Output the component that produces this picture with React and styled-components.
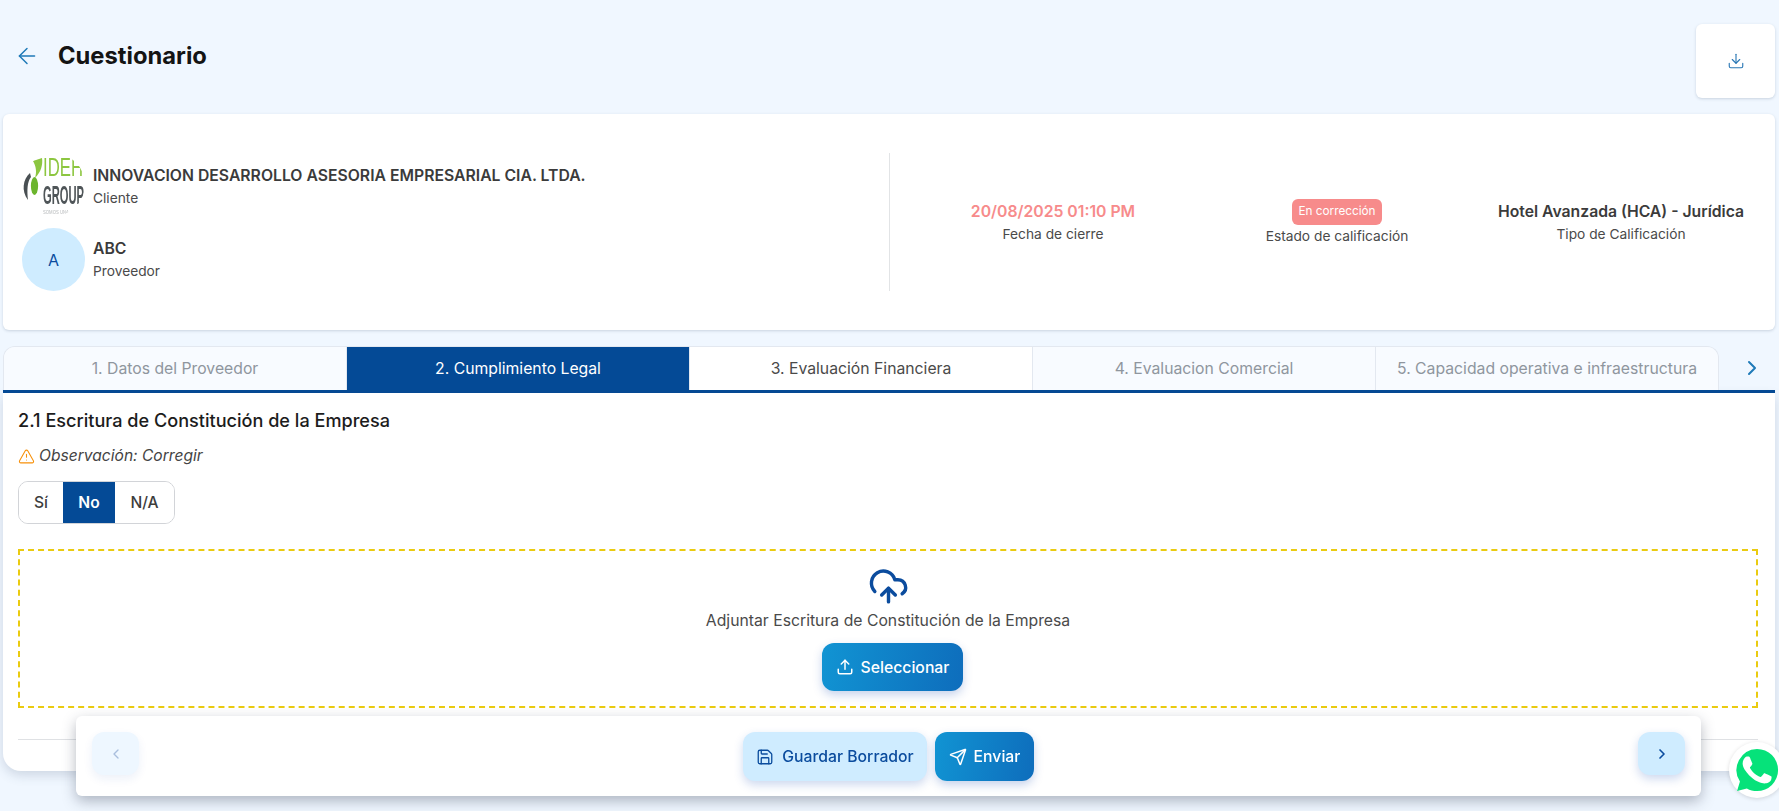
import React from "react";
import styled, { createGlobalStyle } from "styled-components";
import {
  ArrowLeft,
  ChevronLeft,
  ChevronRight,
  CloudUpload,
  Download,
  Save,
  Send,
  TriangleAlert,
  Upload,
} from "lucide-react";

const GlobalStyle = createGlobalStyle`
  html, body {
    margin: 0;
    padding: 0;
    height: 100%;
    overflow: hidden;
    background: #f0f7ff;
    font-family: Inter, "Liberation Sans", sans-serif;
    color: #3d3d3d;
  }
  * { box-sizing: border-box; }
`;

const Page = styled.div`
  height: 811px;
  padding: 0 4px 0 3px;
  overflow: hidden;
`;

const Header = styled.header`
  display: flex;
  justify-content: space-between;
  align-items: flex-start;
  height: 114px;
  padding-top: 24px;
`;

const TitleGroup = styled.div`
  display: flex;
  align-items: center;
  gap: 18px;
  height: 64px;
  padding-left: 11px;
  color: #1f7ab8;
`;

const Title = styled.h1`
  margin: 0;
  font-size: 23.75px;
  line-height: 32px;
  font-weight: 700;
  color: #141414;
`;

const IconCard = styled.button`
  display: flex;
  align-items: center;
  justify-content: center;
  width: 79px;
  height: 74px;
  border: 0;
  border-radius: 6px;
  background: #fff;
  color: #2a78b5;
  box-shadow: 0 1px 3px rgba(60, 80, 110, 0.22);
`;

const InfoCard = styled.section`
  display: flex;
  align-items: center;
  height: 216px;
  padding: 0 12px 0 19px;
  border-radius: 6px;
  background: #fff;
  box-shadow: 0 1px 3px rgba(60, 80, 110, 0.22);
`;

const Parties = styled.div`
  display: flex;
  flex-direction: column;
  gap: 12px;
  width: 868px;
  height: 138px;
  border-right: 1px solid #e2e4e6;
`;

const Party = styled.div`
  display: flex;
  align-items: center;
  gap: 8px;
  height: 63px;
`;

const PartyText = styled.div`
  margin-top: ${(p) => p.$drop || 0}px;
`;

const AvatarCircle = styled.div`
  display: flex;
  align-items: center;
  justify-content: center;
  flex: none;
  width: 63px;
  height: 63px;
  border-radius: 50%;
  overflow: hidden;
  background: ${(p) => (p.$plain ? "#fff" : "#cfecff")};
  color: #0b4c9e;
  font-size: 16px;
`;

const PartyName = styled.div`
  font-size: 15.75px;
  line-height: 23px;
  font-weight: 600;
  color: #3b3b3b;
`;

const Caption = styled.div`
  font-size: 13.75px;
  line-height: 23px;
  color: #4a4a4a;
`;

const Facts = styled.div`
  display: grid;
  flex: 1;
  grid-template-columns: repeat(3, 1fr);
  margin: 2px 0 0 21px;
`;

const Fact = styled.div`
  display: flex;
  flex-direction: column;
  align-items: center;
  text-align: center;
`;

const FactValue = styled.div`
  margin-top: 1px;
  font-size: 15.75px;
  line-height: 23px;
  font-weight: 600;
  color: ${(p) => p.$color || "#3b3b3b"};
`;

const Badge = styled.span`
  display: block;
  height: 26px;
  padding: 0 6px;
  border-radius: 6px;
  background: #f78b8b;
  color: #fff;
  font-size: 11.75px;
  line-height: 24px;
`;

const Tabs = styled.div`
  display: flex;
  align-items: stretch;
  height: 47px;
  margin-top: 16px;
  border-bottom: 3px solid #044a96;
`;

const TabStrip = styled.div`
  display: flex;
  width: 1716px;
  border: 1px solid #e3e8f0;
  border-bottom: 0;
  border-radius: 12px 12px 0 0;
  overflow: hidden;
`;

const Tab = styled.div`
  display: flex;
  align-items: center;
  justify-content: center;
  flex: 1;
  font-size: 15.75px;
  white-space: nowrap;
  background: ${(p) =>
    p.$active ? "#044a96" : p.$open ? "#fff" : "#f8fbff"};
  color: ${(p) => (p.$active ? "#fff" : p.$open ? "#4a4a4a" : "#8f969e")};
  border-right: ${(p) => (p.$last ? "0" : "1px solid #e3e8f0")};
`;

const TabArrow = styled.div`
  display: flex;
  align-items: center;
  justify-content: center;
  flex: 1;
  padding-left: 10px;
  color: #1f7ab8;
`;

const Panel = styled.section`
  display: flex;
  flex-direction: column;
  height: 378px;
  padding: 0 17px 0 15px;
  border-radius: 0 0 18px 18px;
  background: #fff;
  box-shadow: 0 4px 12px rgba(60, 80, 110, 0.2);
`;

const SectionTitle = styled.h2`
  margin: 16px 0 0;
  font-size: 18.1px;
  line-height: 22px;
  font-weight: 500;
  color: #1c1c1c;
`;

const Observation = styled.div`
  display: flex;
  align-items: center;
  gap: 4px;
  margin-top: 14px;
  font-size: 15.6px;
  line-height: 22px;
  font-style: italic;
  color: #444;

  svg {
    color: #f79009;
  }
`;

const Choice = styled.div`
  display: flex;
  align-self: flex-start;
  height: 43px;
  margin-top: 14px;
  border: 1px solid #d2d4d8;
  border-radius: 10px;
  overflow: hidden;
`;

const ChoiceItem = styled.div`
  display: flex;
  align-items: center;
  justify-content: center;
  width: ${(p) => p.$width}px;
  font-size: 15.6px;
  font-weight: ${(p) => (p.$active ? 600 : 500)};
  background: ${(p) => (p.$active ? "#044a96" : "#fff")};
  color: ${(p) => (p.$active ? "#fff" : "#3d3d3d")};
`;

const DropZone = styled.div`
  display: flex;
  flex-direction: column;
  align-items: center;
  height: 159px;
  margin-top: 25px;
  padding-top: 15px;
  border: 2px dashed #eacb10;
  color: #0b4c9e;
`;

const DropText = styled.div`
  margin-top: 3px;
  font-size: 15.75px;
  line-height: 22px;
  color: #4a4a4a;
`;

const PrimaryButton = styled.button`
  display: flex;
  align-items: center;
  justify-content: center;
  gap: 7px;
  width: ${(p) => p.$width}px;
  height: ${(p) => p.$height}px;
  border: 0;
  border-radius: 12px;
  background: linear-gradient(100deg, #1194d3, #0e6dbc);
  color: #fff;
  font-family: inherit;
  font-size: 15.75px;
  font-weight: 500;
  box-shadow: 0 4px 10px rgba(30, 80, 180, 0.25);
`;

const UploadButton = styled(PrimaryButton)`
  margin: 11px 0 0 9px;
`;

const PanelRule = styled.div`
  height: 1px;
  margin-top: 31px;
  background: #dfe1e4;
`;

/* floating bar sits over the bottom of the panel */
const ActionBar = styled.div`
  position: fixed;
  left: 76px;
  top: 716px;
  display: flex;
  justify-content: space-between;
  align-items: flex-start;
  width: 1625px;
  height: 80px;
  padding: 16px 16px 0;
  border-radius: 6px;
  background: #fff;
  box-shadow: 0 5px 14px rgba(40, 50, 70, 0.34);
`;

const ActionCenter = styled.div`
  display: flex;
  gap: 8px;
`;

const NavButton = styled.button`
  display: flex;
  align-items: center;
  justify-content: center;
  width: 47px;
  height: 43px;
  border: 0;
  border-radius: 12px;
  background: ${(p) => (p.$disabled ? "#eef7ff" : "#cfecff")};
  color: ${(p) => (p.$disabled ? "#a9bedd" : "#0b4c9e")};
  box-shadow: 0 4px 10px
    ${(p) => (p.$disabled ? "rgba(30, 80, 180, 0.08)" : "rgba(30, 80, 180, 0.22)")};
`;

const DraftButton = styled.button`
  display: flex;
  align-items: center;
  justify-content: center;
  gap: 8px;
  width: 184px;
  height: 49px;
  border: 0;
  border-radius: 12px;
  background: #cfecff;
  color: #0b4c9e;
  font-family: inherit;
  font-size: 15.75px;
  font-weight: 500;
  box-shadow: 0 4px 10px rgba(30, 80, 180, 0.22);
`;

const WhatsApp = styled.a`
  position: fixed;
  left: 1729px;
  top: 742px;
  display: flex;
  align-items: center;
  justify-content: center;
  width: 56px;
  height: 56px;
  border-radius: 50%;
  background: #fff;
  box-shadow: 0 1px 4px rgba(0, 0, 0, 0.15);
`;

const LogoMark = () => (
  <svg width="63" height="63" viewBox="0 0 63 63">
    <defs>
      <filter id="soft">
        <feGaussianBlur stdDeviation="0.35" />
      </filter>
    </defs>
    <g filter="url(#soft)">
      <path d="M11 8 L20 5 C21 12 19 19 13 25 C15 19 14 13 11 8 Z" fill="#8cc63f" />
      <ellipse cx="12.5" cy="33" rx="3.6" ry="9" fill="#6cb52d" />
      <path d="M8 20 C1 26 -1 38 6 47 C5 38 5 29 9 24 Z" fill="#4a5052" />
      <text
        transform="translate(21 23) scale(0.67 1)"
        fontFamily="Liberation Sans, sans-serif"
        fontSize="25"
        fill="#8cc63f"
      >
        IDEH
      </text>
      <text
        transform="translate(21 51) scale(0.447 1)"
        fontFamily="Liberation Sans, sans-serif"
        fontSize="25"
        fontWeight="700"
        fill="#4f5558"
      >
        GROUP
      </text>
      <text
        transform="translate(21 61) scale(0.85 1)"
        fontFamily="Liberation Sans, sans-serif"
        fontSize="5"
        fill="#b5b8ba"
      >
        SOMOS UNA
      </text>
    </g>
  </svg>
);

const WhatsAppMark = () => (
  <svg width="46" height="46" viewBox="0 0 24 24">
    <path
      d="M12 1a11 11 0 0 1 0 22c-1.900 0-3.700-.5-5.300-1.400L1.600 23l1.500-5A11 11 0 0 1 12 1z"
      fill="#06e27a"
    />
    <path
      transform="translate(-3 -3) scale(1.25)"
      fill="#fff"
      d="M17.472 14.382c-.297-.149-1.758-.867-2.03-.967-.273-.099-.471-.148-.67.15-.197.297-.767.966-.94 1.164-.173.199-.347.223-.644.075-.297-.15-1.255-.463-2.39-1.475-.883-.788-1.48-1.761-1.653-2.059-.173-.297-.018-.458.13-.606.134-.133.298-.347.446-.52.149-.174.198-.298.298-.497.099-.198.05-.371-.025-.52-.075-.149-.669-1.612-.916-2.207-.242-.579-.487-.5-.669-.51-.173-.008-.371-.01-.57-.01-.198 0-.52.074-.792.372-.272.297-1.04 1.016-1.04 2.479 0 1.462 1.065 2.875 1.213 3.074.149.198 2.096 3.2 5.077 4.487.709.306 1.262.489 1.694.625.712.227 1.36.195 1.871.118.571-.085 1.758-.719 2.006-1.413.248-.694.248-1.289.173-1.413-.074-.124-.272-.198-.57-.347z"
    />
  </svg>
);

const tabs = [
  { label: "1. Datos del Proveedor" },
  { label: "2. Cumplimiento Legal", active: true },
  { label: "3. Evaluación Financiera", open: true },
  { label: "4. Evaluacion Comercial" },
  { label: "5. Capacidad operativa e infraestructura", last: true },
];

export default function App() {
  return (
    <Page>
      <GlobalStyle />
      <Header>
        <TitleGroup>
          <ArrowLeft size={26} strokeWidth={1.35} />
          <Title>Cuestionario</Title>
        </TitleGroup>
        <IconCard>
          <Download size={18} strokeWidth={1.5} />
        </IconCard>
      </Header>

      <InfoCard>
        <Parties>
          <Party>
            <AvatarCircle $plain>
              <LogoMark />
            </AvatarCircle>
            <PartyText $drop={4}>
              <PartyName>INNOVACION DESARROLLO ASESORIA EMPRESARIAL CIA. LTDA.</PartyName>
              <Caption>Cliente</Caption>
            </PartyText>
          </Party>
          <Party>
            <AvatarCircle>A</AvatarCircle>
            <PartyText>
              <PartyName>ABC</PartyName>
              <Caption>Proveedor</Caption>
            </PartyText>
          </Party>
        </Parties>
        <Facts>
          <Fact>
            <FactValue $color="#f78b8b">20/08/2025 01:10 PM</FactValue>
            <Caption>Fecha de cierre</Caption>
          </Fact>
          <Fact>
            <Badge>En corrección</Badge>
            <Caption>Estado de calificación</Caption>
          </Fact>
          <Fact>
            <FactValue>Hotel Avanzada (HCA) - Jurídica</FactValue>
            <Caption>Tipo de Calificación</Caption>
          </Fact>
        </Facts>
      </InfoCard>

      <Tabs>
        <TabStrip>
          {tabs.map((tab) => (
            <Tab key={tab.label} $active={tab.active} $open={tab.open} $last={tab.last}>
              {tab.label}
            </Tab>
          ))}
        </TabStrip>
        <TabArrow>
          <ChevronRight size={24} strokeWidth={2} />
        </TabArrow>
      </Tabs>

      <Panel>
        <SectionTitle>2.1 Escritura de Constitución de la Empresa</SectionTitle>
        <Observation>
          <TriangleAlert size={17} strokeWidth={1.5} />
          Observación: Corregir
        </Observation>
        <Choice>
          <ChoiceItem $width={44}>Sí</ChoiceItem>
          <ChoiceItem $width={52} $active>No</ChoiceItem>
          <ChoiceItem $width={59}>N/A</ChoiceItem>
        </Choice>
        <DropZone>
          <CloudUpload size={41} strokeWidth={2} />
          <DropText>Adjuntar Escritura de Constitución de la Empresa</DropText>
          <UploadButton $width={141} $height={48}>
            <Upload size={18} strokeWidth={2} />
            Seleccionar
          </UploadButton>
        </DropZone>
        <PanelRule />
      </Panel>

      <ActionBar>
        <NavButton $disabled>
          <ChevronLeft size={16} />
        </NavButton>
        <ActionCenter>
          <DraftButton>
            <Save size={18} strokeWidth={1.75} />
            Guardar Borrador
          </DraftButton>
          <PrimaryButton $width={99} $height={49}>
            <Send size={18} strokeWidth={2} />
            Enviar
          </PrimaryButton>
        </ActionCenter>
        <NavButton>
          <ChevronRight size={16} strokeWidth={2.5} />
        </NavButton>
      </ActionBar>

      <WhatsApp>
        <WhatsAppMark />
      </WhatsApp>
    </Page>
  );
}
